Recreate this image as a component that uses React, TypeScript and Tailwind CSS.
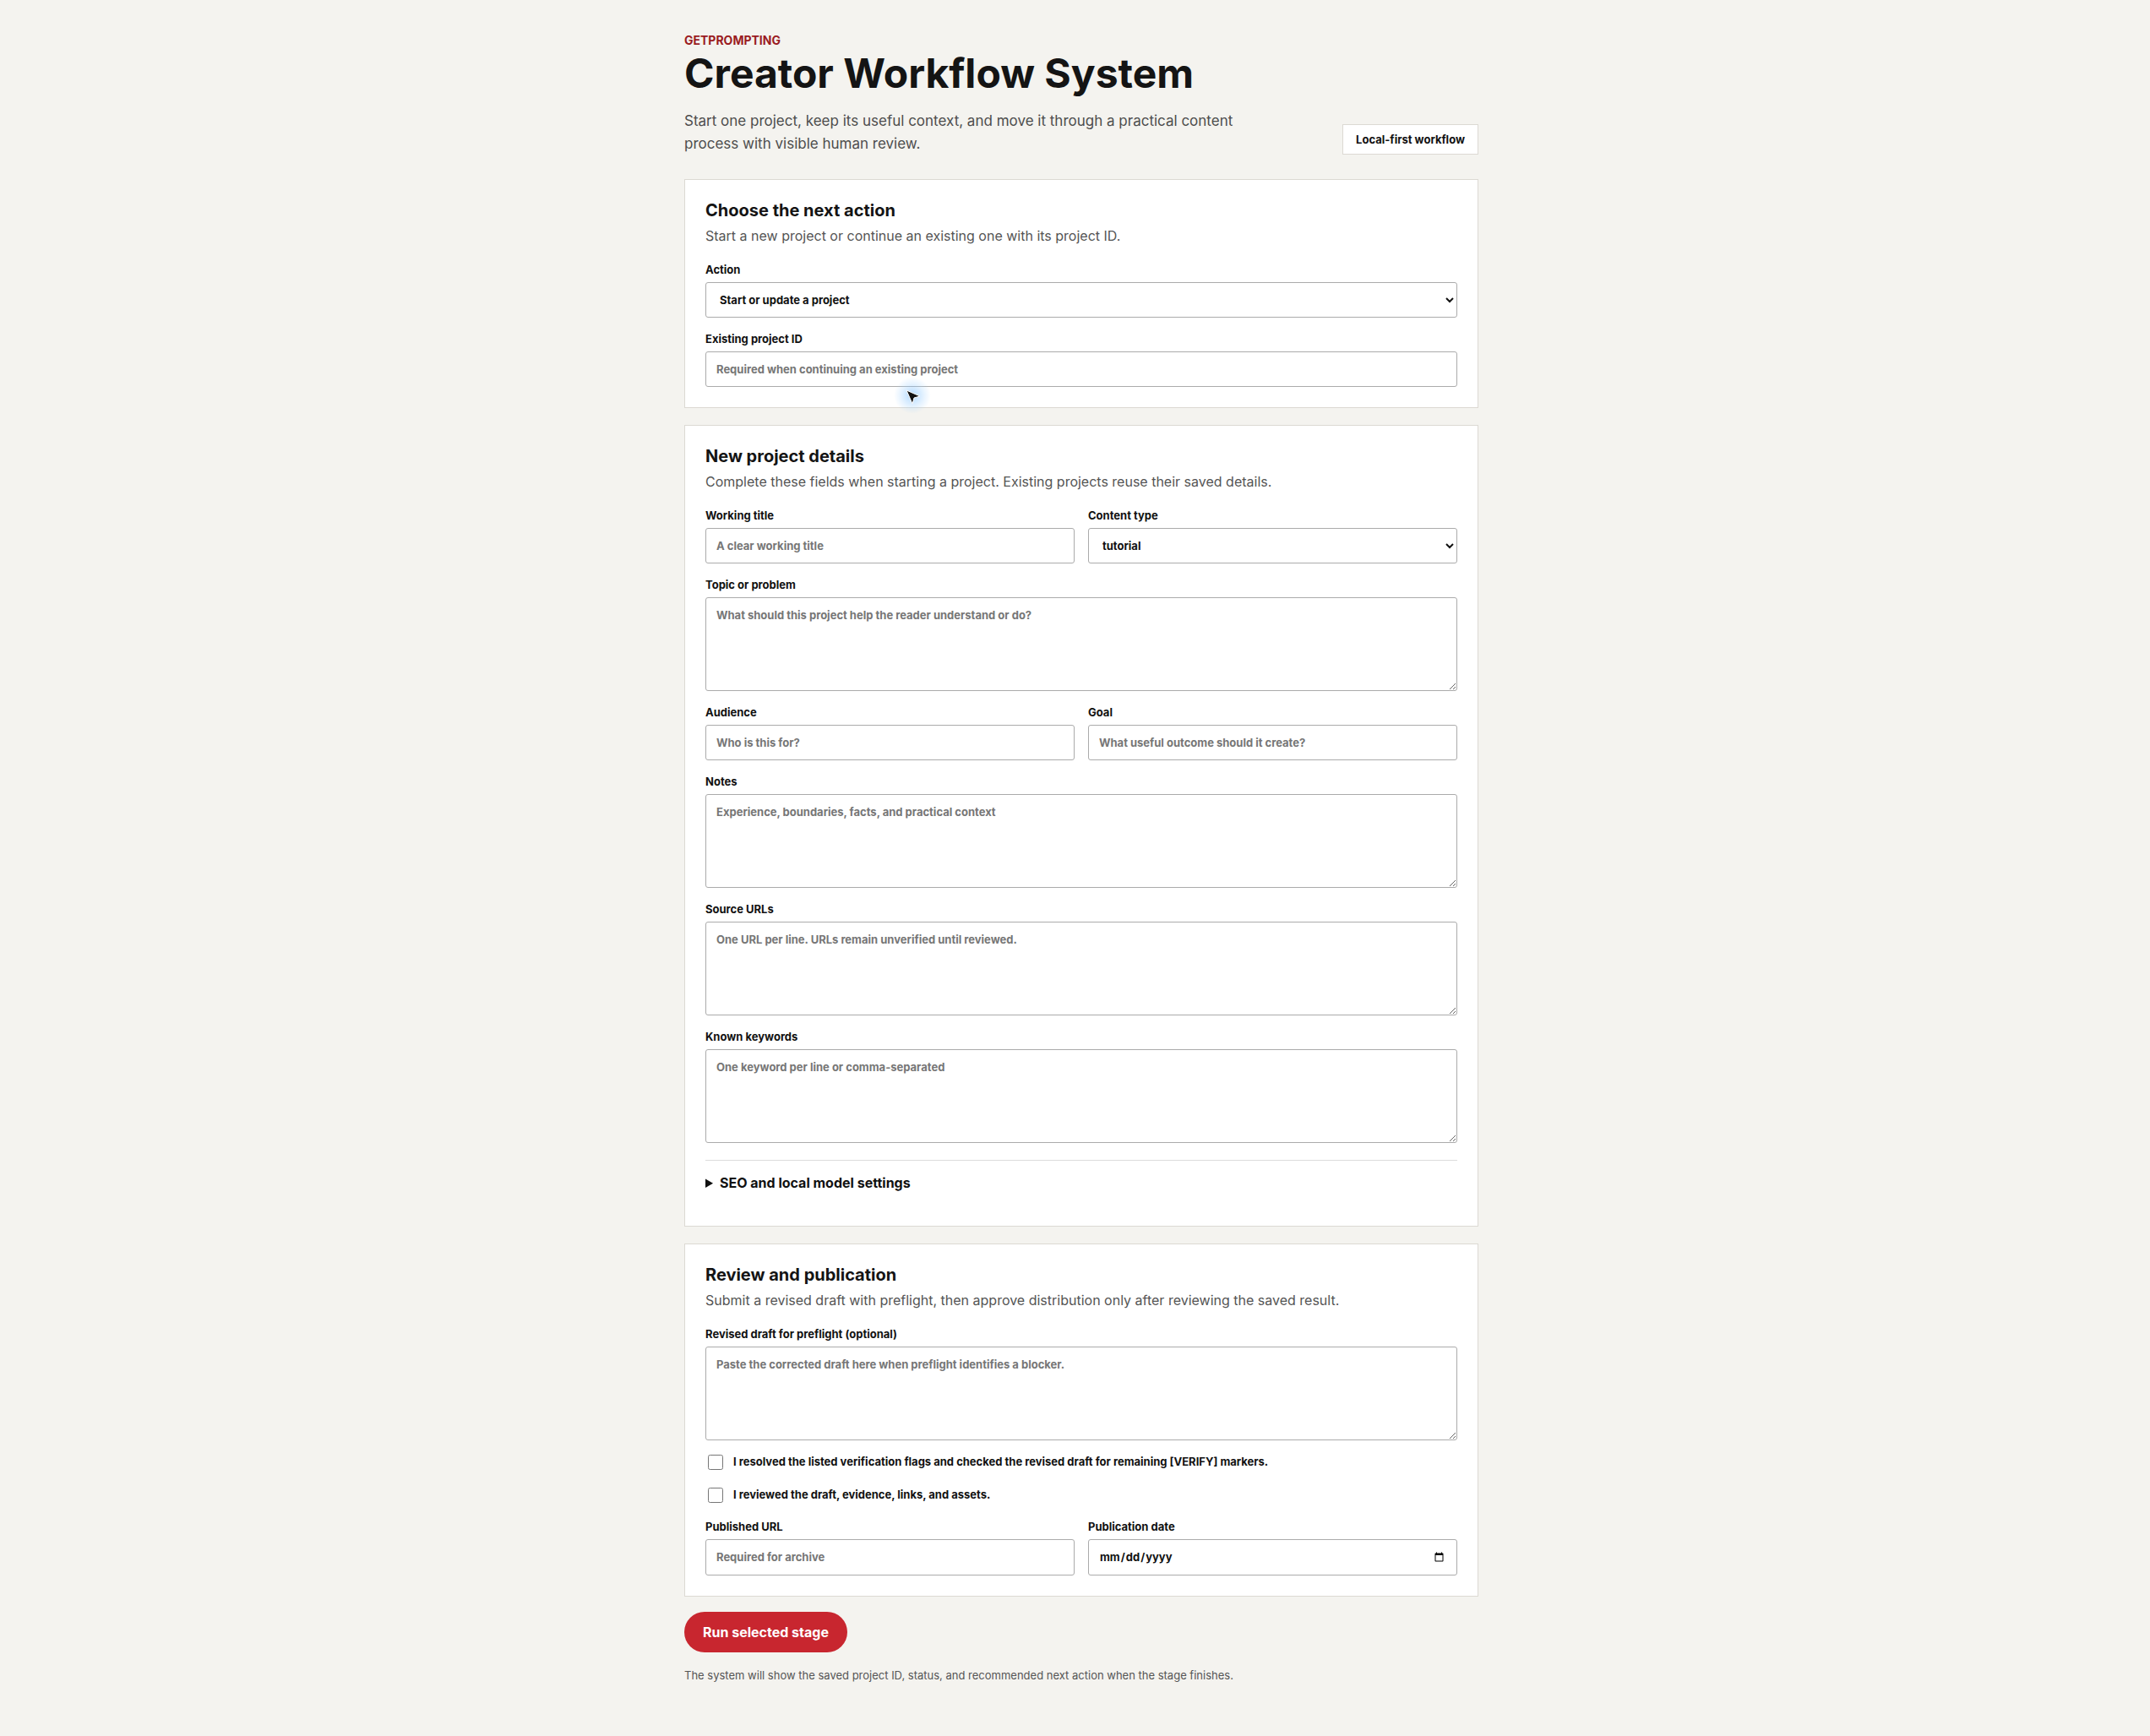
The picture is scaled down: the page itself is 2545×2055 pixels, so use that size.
import React from 'react'

const inputClass =
  'h-[42px] w-full rounded-[3px] border border-[#ababab] bg-white px-3 text-[13px] font-bold text-[#111] placeholder:text-[#767676] outline-none'

const textareaClass =
  'block h-[111px] w-full rounded-[3px] border border-[#ababab] bg-white px-3 pt-2.5 text-[13px] font-bold leading-5 text-[#111] placeholder:text-[#767676] outline-none'

const Label: React.FC<{ children: React.ReactNode }> = ({ children }) => (
  <label className="mb-1.5 block text-[13px] font-bold leading-[18px] text-[#111]">{children}</label>
)

const Card: React.FC<{ title: string; subtitle: string; children: React.ReactNode }> = ({ title, subtitle, children }) => (
  <section className="border border-[#dcd9d3] bg-white px-6 pt-[22px] pb-6">
    <h2 className="text-xl font-bold leading-7 text-[#141414]">{title}</h2>
    <p className="mt-1 text-base leading-6 text-[#555]">{subtitle}</p>
    <div className="mt-[19px] flex flex-col gap-4">{children}</div>
  </section>
)

const App: React.FC = () => {
  return (
    <div className="min-h-screen bg-[#f4f3ef] pl-[15px] font-['Inter',sans-serif] text-[#111]">
      <div className="relative mx-auto w-[940px] pt-[38px] pb-16">
        {/* Header */}
        <header className="flex items-end justify-between gap-8">
          <div>
            <p className="text-sm font-bold leading-5 text-[#9a1b22]">GETPROMPTING</p>
            <h1 className="mt-[3px] text-[48px] font-bold leading-[1.1] text-[#141414]">Creator Workflow System</h1>
            <p className="mt-4 max-w-[680px] text-[17px] leading-[27px] text-[#4d4d4d]">
              Start one project, keep its useful context, and move it through a practical content process with visible
              human review.
            </p>
          </div>
          <span className="mb-px border border-[#dcd9d3] bg-white px-[15px] py-[9px] text-[13px] font-bold leading-4 text-[#111]">
            Local-first workflow
          </span>
        </header>

        <main className="mt-7 flex flex-col gap-5">
          {/* Action */}
          <Card title="Choose the next action" subtitle="Start a new project or continue an existing one with its project ID.">
            <div>
              <Label>Action</Label>
              <select className={inputClass} defaultValue="start">
                <option value="start">Start or update a project</option>
                <option value="continue">Continue an existing project</option>
              </select>
            </div>
            <div>
              <Label>Existing project ID</Label>
              <input className={inputClass} placeholder="Required when continuing an existing project" />
            </div>
          </Card>

          {/* Project details */}
          <Card
            title="New project details"
            subtitle="Complete these fields when starting a project. Existing projects reuse their saved details."
          >
            <div className="grid grid-cols-2 gap-4">
              <div>
                <Label>Working title</Label>
                <input className={inputClass} placeholder="A clear working title" />
              </div>
              <div>
                <Label>Content type</Label>
                <select className={inputClass} defaultValue="tutorial">
                  <option value="tutorial">tutorial</option>
                  <option value="guide">guide</option>
                  <option value="essay">essay</option>
                </select>
              </div>
            </div>
            <div>
              <Label>Topic or problem</Label>
              <textarea className={textareaClass} placeholder="What should this project help the reader understand or do?" />
            </div>
            <div className="grid grid-cols-2 gap-4">
              <div>
                <Label>Audience</Label>
                <input className={inputClass} placeholder="Who is this for?" />
              </div>
              <div>
                <Label>Goal</Label>
                <input className={inputClass} placeholder="What useful outcome should it create?" />
              </div>
            </div>
            <div>
              <Label>Notes</Label>
              <textarea className={textareaClass} placeholder="Experience, boundaries, facts, and practical context" />
            </div>
            <div>
              <Label>Source URLs</Label>
              <textarea className={textareaClass} placeholder="One URL per line. URLs remain unverified until reviewed." />
            </div>
            <div>
              <Label>Known keywords</Label>
              <textarea className={textareaClass} placeholder="One keyword per line or comma-separated" />
            </div>
            <details className="mt-1 border-t border-[#dcdcdc] pt-3 pb-[13px]">
              <summary className="cursor-pointer text-base font-bold leading-7 text-[#111]">
                SEO and local model settings
              </summary>
            </details>
          </Card>

          {/* Review */}
          <Card
            title="Review and publication"
            subtitle="Submit a revised draft with preflight, then approve distribution only after reviewing the saved result."
          >
            <div>
              <Label>Revised draft for preflight (optional)</Label>
              <textarea className={textareaClass} placeholder="Paste the corrected draft here when preflight identifies a blocker." />
            </div>
            <label className="-mt-0.5 flex min-h-6 items-center gap-3 text-[13px] font-bold text-[#111]">
              <input type="checkbox" className="ml-[3px] h-[18px] w-[18px]" />
              I resolved the listed verification flags and checked the revised draft for remaining [VERIFY] markers.
            </label>
            <label className="-mt-px flex min-h-6 items-center gap-3 text-[13px] font-bold text-[#111]">
              <input type="checkbox" className="ml-[3px] h-[18px] w-[18px]" />
              I reviewed the draft, evidence, links, and assets.
            </label>
            <div className="grid grid-cols-2 gap-4">
              <div>
                <Label>Published URL</Label>
                <input className={inputClass + ' h-[43px]'} placeholder="Required for archive" />
              </div>
              <div>
                <Label>Publication date</Label>
                <input type="date" className={inputClass + ' h-[43px]'} />
              </div>
            </div>
          </Card>

          <div className="-mt-0.5">
            <button className="rounded-full bg-[#c8262f] px-[22px] py-3 text-base font-bold leading-6 text-white">
              Run selected stage
            </button>
            <p className="mt-[17px] text-[13px] leading-5 text-[#555]">
              The system will show the saved project ID, status, and recommended next action when the stage finishes.
            </p>
          </div>
        </main>

        {/* pointer captured in the screenshot */}
        <div className="pointer-events-none absolute top-[446px] left-[248px] h-[44px] w-[44px] rounded-full bg-[radial-gradient(circle,rgba(120,190,255,0.55)_0%,rgba(160,210,255,0.25)_45%,rgba(255,255,255,0)_70%)]">
          <svg width="20" height="20" viewBox="0 0 20 20" className="absolute top-[15px] left-[14px]">
            <path d="M1 1 L17 8 L10 10 L8 17 Z" fill="#111" stroke="#fff" strokeWidth="1" strokeLinejoin="round" />
          </svg>
        </div>
      </div>
    </div>
  )
}

export default App
